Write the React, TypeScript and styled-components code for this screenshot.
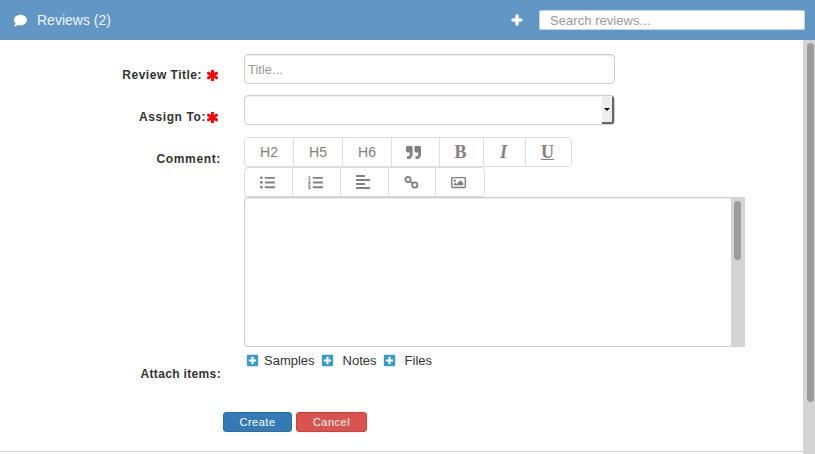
import { createGlobalStyle, styled } from "styled-components";
import {
  FaAlignLeft,
  FaAsterisk,
  FaComment,
  FaListOl,
  FaListUl,
  FaPlus,
  FaPlusSquare,
  FaQuoteRight,
  FaRegImage,
} from "react-icons/fa";

const GlobalStyle = createGlobalStyle`
  html, body {
    margin: 0;
    height: 100%;
    overflow: hidden;
    background: #fff;
    font-family: "Liberation Sans", Arial, sans-serif;
    color: #333;
  }
  * { box-sizing: border-box; }
`;

const Page = styled.div`
  display: flex;
  flex-direction: column;
  width: 815px;
  height: 454px;
`;

const Header = styled.header`
  display: flex;
  align-items: center;
  flex: 0 0 40px;
  padding: 0 10px 0 14px;
  background: #6297c5;
  color: #fff;
`;

const HeaderTitle = styled.span`
  flex: 1;
  margin-left: 10px;
  font-size: 14px;
  color: #f0f5fa;
`;

const AddButton = styled.span`
  display: flex;
  margin-right: 16px;
  font-size: 12px;
  & > svg {
    stroke: currentColor;
    stroke-width: 40px;
  }
`;

const SearchInput = styled.input`
  width: 266px;
  height: 20px;
  padding: 0 10px;
  border: 1px solid #c4d6e6;
  border-radius: 2px;
  background: #fff;
  font: 13px "Liberation Sans", Arial, sans-serif;
  letter-spacing: 0.05px;
  &::placeholder { color: #999; opacity: 1; }
`;

const Body = styled.div`
  display: flex;
  flex: 1;
  min-height: 0;
`;

const Content = styled.main`
  flex: 1;
  height: 412px;
  border-bottom: 1px solid #d3d3d3;
`;

const Track = styled.div<{ $wide: number; $inset: number }>`
  flex: 0 0 ${(p) => p.$wide}px;
  padding-left: ${(p) => p.$inset}px;
  background: #d4d4d4;
`;

const Thumb = styled.div<{ $top: number; $height: number }>`
  width: 7px;
  height: ${(p) => p.$height}px;
  margin-top: ${(p) => p.$top}px;
  border-radius: 4px;
  background: #9c9c9c;
`;

const Form = styled.form`
  display: grid;
  grid-template-columns: 221px 501px;
  column-gap: 23px;
  padding-top: 14px;
`;

const Label = styled.label<{ $top: number; $track: number }>`
  display: flex;
  justify-content: flex-end;
  align-items: center;
  padding-top: ${(p) => p.$top}px;
  height: fit-content;
  font-size: 12px;
  font-weight: bold;
  letter-spacing: ${(p) => p.$track}px;
  white-space: nowrap;
`;

const Required = styled.span<{ $gap: number }>`
  display: flex;
  margin-left: ${(p) => p.$gap}px;
  margin-right: 3px;
  color: #f00;
  font-size: 11px;
  & > svg {
    stroke: currentColor;
    stroke-width: 50px;
  }
`;

const TitleInput = styled.input`
  display: block;
  width: 371px;
  height: 30px;
  padding: 0 3px;
  border: 1px solid #ccc;
  border-radius: 4px;
  box-shadow: inset 0 1px 1px rgba(0, 0, 0, 0.075);
  font: 13px "Liberation Sans", Arial, sans-serif;
  &::placeholder { color: #999; opacity: 1; }
`;

const SelectBox = styled.div`
  display: flex;
  justify-content: flex-end;
  width: 371px;
  height: 30px;
  margin-top: 11px;
  border: 1px solid #ccc;
  border-radius: 4px;
  box-shadow: inset 0 1px 1px rgba(0, 0, 0, 0.075);
  overflow: hidden;
`;

const SelectArrow = styled.span`
  display: flex;
  align-items: center;
  justify-content: center;
  width: 12px;
  background: #eee;
  border-right: 2px solid #666;
  border-bottom: 2px solid #666;
  &::after {
    content: "";
    border-top: 3px solid #000;
    border-left: 3px solid transparent;
    border-right: 3px solid transparent;
  }
`;

const Toolbar = styled.div<{ $top: number }>`
  display: flex;
  width: fit-content;
  height: 30px;
  margin-top: ${(p) => p.$top}px;
  border: 1px solid #ddd;
  border-radius: 4px;
`;

const ToolButton = styled.span<{ $width: number; $nudge?: number }>`
  display: flex;
  align-items: center;
  justify-content: center;
  width: ${(p) => p.$width}px;
  padding-right: ${(p) => p.$nudge ?? 0}px;
  color: #808080;
  font-size: 14px;
  &:not(:first-child) { border-left: 1px solid #ddd; }
`;

const SerifGlyph = styled.span<{ $italic?: boolean; $under?: boolean }>`
  font: bold 18px "Liberation Serif", serif;
  font-style: ${(p) => (p.$italic ? "italic" : "normal")};
  text-decoration: ${(p) => (p.$under ? "underline" : "none")};
`;

const Editor = styled.div`
  display: flex;
  justify-content: flex-end;
  width: 501px;
  height: 150px;
  border: 1px solid #ccc;
  border-right-color: #d4d4d4;
  border-radius: 4px 0 0 4px;
  box-shadow: inset 0 1px 1px rgba(0, 0, 0, 0.075);
`;

const AttachRow = styled.div`
  display: flex;
  align-items: center;
  height: 14px;
  margin-top: 6px;
  font-size: 13px;
`;

const AttachItem = styled.span<{ $gap: number; $left: number }>`
  display: flex;
  align-items: center;
  margin-left: ${(p) => p.$left}px;
  & > svg {
    margin-right: ${(p) => p.$gap}px;
    color: #3a9cc4;
    font-size: 13px;
  }
`;

const Actions = styled.div`
  display: flex;
  gap: 4px;
  grid-column: 1 / -1;
  margin-top: 31px;
  padding-left: 223px;
`;

const ActionButton = styled.button<{ $bg: string; $line: string; $width: number }>`
  width: ${(p) => p.$width}px;
  height: 20px;
  padding: 0;
  border: 1px solid ${(p) => p.$line};
  border-radius: 3px;
  background: ${(p) => p.$bg};
  color: #fff;
  font: 11px "Liberation Sans", Arial, sans-serif;
  letter-spacing: 0.5px;
`;

function LinkIcon() {
  return (
    <svg width="15" height="15" viewBox="0 0 15 15" fill="none" stroke="#808080" strokeWidth="1.8">
      <circle cx="4" cy="4.5" r="2.6" />
      <circle cx="10.8" cy="10" r="2.6" />
      <path d="M6 6.2l2.8 2.2" />
    </svg>
  );
}

export default function App() {
  return (
    <Page>
      <GlobalStyle />
      <Header>
        <FaComment size={13} />
        <HeaderTitle>Reviews (2)</HeaderTitle>
        <AddButton>
          <FaPlus />
        </AddButton>
        <SearchInput placeholder="Search reviews..." />
      </Header>
      <Body>
        <Content>
          <Form>
            <Label $top={14} $track={0.5}>
              Review Title:
              <Required $gap={5}>
                <FaAsterisk />
              </Required>
            </Label>
            <TitleInput placeholder="Title..." />

            <Label $top={26} $track={0.6}>
              Assign To:
              <Required $gap={1}>
                <FaAsterisk />
              </Required>
            </Label>
            <SelectBox>
              <SelectArrow />
            </SelectBox>

            <Label $top={27} $track={0.65}>
              Comment:
            </Label>
            <div>
              <Toolbar $top={12}>
                <ToolButton $width={48}>H2</ToolButton>
                <ToolButton $width={49}>H5</ToolButton>
                <ToolButton $width={49}>H6</ToolButton>
                <ToolButton $width={48} $nudge={4}>
                  <FaQuoteRight size={15} />
                </ToolButton>
                <ToolButton $width={44} $nudge={2}>
                  <SerifGlyph>B</SerifGlyph>
                </ToolButton>
                <ToolButton $width={42} $nudge={2}>
                  <SerifGlyph $italic>I</SerifGlyph>
                </ToolButton>
                <ToolButton $width={46} $nudge={2}>
                  <SerifGlyph $under>U</SerifGlyph>
                </ToolButton>
              </Toolbar>
              <Toolbar $top={0}>
                <ToolButton $width={47} $nudge={2}>
                  <FaListUl size={15} />
                </ToolButton>
                <ToolButton $width={48} $nudge={2}>
                  <FaListOl size={15} />
                </ToolButton>
                <ToolButton $width={48} $nudge={3}>
                  <FaAlignLeft size={16} />
                </ToolButton>
                <ToolButton $width={47} $nudge={2}>
                  <LinkIcon />
                </ToolButton>
                <ToolButton $width={49} $nudge={4}>
                  <FaRegImage size={15} />
                </ToolButton>
              </Toolbar>
              <Editor>
                <Track $wide={13} $inset={3}>
                  <Thumb $top={3} $height={59} />
                </Track>
              </Editor>
            </div>

            <Label $top={20} $track={0.35}>
              Attach items:
            </Label>
            <AttachRow>
              <AttachItem $gap={5} $left={2}>
                <FaPlusSquare />
                Samples
              </AttachItem>
              <AttachItem $gap={9} $left={6}>
                <FaPlusSquare />
                Notes
              </AttachItem>
              <AttachItem $gap={9} $left={6}>
                <FaPlusSquare />
                Files
              </AttachItem>
            </AttachRow>

            <Actions>
              <ActionButton $bg="#337ab7" $line="#2e6da4" $width={69}>
                Create
              </ActionButton>
              <ActionButton $bg="#d9534f" $line="#d43f3a" $width={71}>
                Cancel
              </ActionButton>
            </Actions>
          </Form>
        </Content>
        <Track $wide={12} $inset={4}>
          <Thumb $top={3} $height={359} />
        </Track>
      </Body>
    </Page>
  );
}
